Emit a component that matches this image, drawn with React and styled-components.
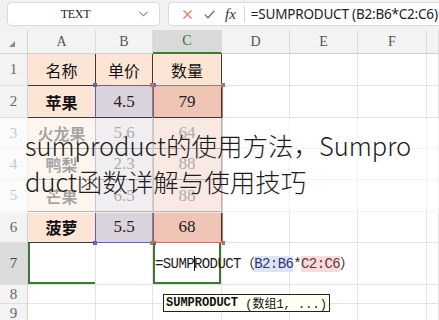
import React from 'react';
import styled, { createGlobalStyle } from 'styled-components';

const GlobalStyle = createGlobalStyle`
  html, body { margin: 0; padding: 0; background: #fff; }
  body { width: 439px; height: 320px; overflow: hidden; font-family: "Liberation Sans", "Noto Sans CJK SC", sans-serif; }
`;

const GREEN = '#3b7a33';

const tones = {
  peach: '#fde5d5',
  lav: '#dad2dc',
  salmon: '#f1c5b6',
  white: '#ffffff',
};

const Page = styled.div`
  position: relative;
  width: 439px;
  height: 320px;
  overflow: hidden;
  background: #fff;
  display: flex;
  flex-direction: column;
`;

const Toolbar = styled.div`
  flex: none;
  height: 30px;
  box-sizing: border-box;
  background: #f1f1f1;
  display: flex;
  align-items: flex-start;
  gap: 8px;
  padding: 2px 0 0 7px;
`;

const NameBox = styled.div`
  width: 153px;
  height: 24px;
  box-sizing: border-box;
  background: #fff;
  border: 1px solid #dadada;
  border-radius: 4px;
  display: grid;
  grid-template-columns: 1fr 20px;
  align-items: center;
`;

const NameText = styled.span`
  text-align: center;
  font-family: "Liberation Serif", serif;
  font-size: 12px;
  color: #222;
  padding-left: 4px;
  letter-spacing: -0.3px;
`;

const Chevron = styled.svg`
  width: 9px;
  height: 6px;
`;

const FormulaBox = styled.div`
  flex: 1;
  height: 24px;
  box-sizing: border-box;
  background: #fff;
  border: 1px solid #dadada;
  border-right: none;
  border-radius: 4px 0 0 4px;
  display: flex;
  align-items: center;
  padding-left: 13px;
`;

const ToolIcon = styled.svg`
  width: 11px;
  height: 11px;
  margin-right: ${p => p.$gap}px;
`;

const Fx = styled.span`
  font-family: "Liberation Serif", serif;
  font-style: italic;
  font-size: 15px;
  color: #333;
  margin-right: 8px;
`;

const Divider = styled.span`
  width: 1px;
  height: 16px;
  background: #d4d4d4;
  margin-right: 6px;
`;

const FormulaBarText = styled.span`
  font-family: "Noto Sans", "Noto Sans CJK SC", sans-serif;
  font-size: 13.5px;
  color: #222;
  white-space: nowrap;
  letter-spacing: -0.2px;
`;

const Sheet = styled.div`
  position: relative;
  flex: 1;
  display: grid;
  grid-template-columns: 28px 68px 57px 69px 68px 68px 69px 1fr;
  grid-template-rows: 24px 32px 32px 31px 31px 32px 31px 42px 19px 20px;
`;

const Corner = styled.div`
  box-sizing: border-box;
  background: #f3f3f3;
  border-right: 1px solid #d2d2d2;
  border-bottom: 1px solid #d2d2d2;
  display: flex;
  align-items: flex-end;
  padding: 0 0 6px 9px;
`;

const ColHead = styled.div`
  box-sizing: border-box;
  background: ${p => (p.$active ? '#d9d9d9' : '#f3f3f3')};
  border-right: 1px solid #dcdcdc;
  border-bottom: ${p => (p.$active ? `2px solid ${GREEN}` : '1px solid #d2d2d2')};
  display: flex;
  align-items: center;
  justify-content: center;
  font-family: "Liberation Serif", serif;
  font-size: 14px;
  color: ${p => (p.$active ? '#3d6b3a' : '#555')};
`;

const RowHead = styled.div`
  box-sizing: border-box;
  background: ${p => (p.$active ? '#dcdcdc' : '#f3f3f3')};
  border-right: 1px solid #d2d2d2;
  border-bottom: 1px solid #dedede;
  display: flex;
  align-items: center;
  justify-content: center;
  font-family: "Liberation Serif", serif;
  font-size: 15px;
  color: ${p => (p.$active ? '#444' : '#666')};
`;

const focusShadow = {
  none: 'none',
  left: `inset 2px 0 0 ${GREEN}, inset 0 -2px 0 ${GREEN}`,
  box: `inset 2px 0 0 ${GREEN}, inset 0 -2px 0 ${GREEN}, inset -2px 0 0 ${GREEN}`,
};

const Cell = styled.div`
  box-sizing: border-box;
  min-width: 0;
  display: flex;
  align-items: center;
  justify-content: center;
  background: ${p => tones[p.$tone || 'white']};
  border-right: 1px solid ${p => (p.$table ? '#3a3a3a' : '#e3e3e3')};
  border-bottom: 1px solid ${p => (p.$table ? '#3a3a3a' : '#e3e3e3')};
  box-shadow: ${p => focusShadow[p.$focus || 'none']};
`;

const FormulaCell = styled(Cell)`
  justify-content: flex-start;
  position: relative;
  z-index: 2;
  overflow: visible;
  padding-left: 2px;
  background: transparent;
`;

const Label = styled.span`
  font-family: "Noto Sans CJK SC", sans-serif;
  font-size: 16px;
  font-weight: ${p => (p.$bold ? 700 : 400)};
  color: #111;
`;

const Num = styled.span`
  font-family: "Liberation Serif", serif;
  font-size: 17px;
  color: #222;
`;

const CellFormula = styled.span`
  display: inline-block;
  font-family: "Liberation Mono", "Noto Sans CJK SC", monospace;
  font-size: 14px;
  letter-spacing: -0.6px;
  color: #1a1a1a;
  white-space: nowrap;
  line-height: 18px;
`;

const Ref = styled.span`
  background: ${p => (p.$c === 'blue' ? '#dfe4f4' : '#f6dddd')};
  color: ${p => (p.$c === 'blue' ? '#2f3b73' : '#6e3434')};
`;

const Caret = styled.span`
  display: inline-block;
  width: 1px;
  height: 15px;
  background: #111;
  margin: 0 -0.5px;
  vertical-align: -3px;
`;

const Range = styled.div`
  position: absolute;
  box-sizing: border-box;
  border: 1px solid ${p => p.$color};
  pointer-events: none;
  z-index: 1;
`;

const Handle = styled.span`
  position: absolute;
  width: 4px;
  height: 4px;
  background: ${p => p.$color};
  ${p => (p.$v === 't' ? 'top: -3px;' : 'bottom: -3px;')}
  ${p => (p.$h === 'l' ? 'left: -3px;' : 'right: -3px;')}
`;

const Tooltip = styled.div`
  position: absolute;
  left: 163px;
  top: 294px;
  height: 18px;
  box-sizing: border-box;
  padding: 0 2px;
  background: #fffff4;
  border: 1px solid #222;
  display: flex;
  align-items: center;
  font-family: "Liberation Mono", "Noto Sans CJK SC", monospace;
  font-size: 12px;
  color: #111;
  white-space: pre;
  z-index: 3;
`;

const TipFn = styled.b`
  font-weight: 700;
`;

const Banner = styled.div`
  position: absolute;
  left: 0;
  top: 118px;
  width: 439px;
  height: 95px;
  box-sizing: border-box;
  padding: 9px 20px 0 25px;
  background: rgba(255, 255, 255, 0.62);
  font-family: "Noto Sans CJK SC", sans-serif;
  font-size: 25.5px;
  font-weight: 300;
  line-height: 36px;
  color: #1c1c1c;
  word-break: break-all;
  z-index: 4;
`;

const data = [
  [{ t: '名称', k: 'label' }, { t: '单价', k: 'label' }, { t: '数量', k: 'label' }],
  [{ t: '苹果', k: 'label', b: true }, { t: '4.5' }, { t: '79' }],
  [{ t: '火龙果', k: 'label', b: true }, { t: '5.6' }, { t: '64' }],
  [{ t: '鸭梨', k: 'label', b: true }, { t: '2.3' }, { t: '88' }],
  [{ t: '芒果', k: 'label', b: true }, { t: '6.5' }, { t: '88' }],
  [{ t: '菠萝', k: 'label', b: true }, { t: '5.5' }, { t: '68' }],
];

const colLetters = ['A', 'B', 'C', 'D', 'E', 'F', ''];

function toneFor(r, c) {
  if (r === 0 || c === 0) return 'peach';
  return c === 1 ? 'lav' : 'salmon';
}

function Empty({ count }) {
  return Array.from({ length: count }, (_, i) => <Cell key={'e' + i} />);
}

function Handles({ color }) {
  return (
    <>
      <Handle $color={color} $v="t" $h="l" />
      <Handle $color={color} $v="t" $h="r" />
      <Handle $color={color} $v="b" $h="l" />
      <Handle $color={color} $v="b" $h="r" />
    </>
  );
}

export default function App() {
  return (
    <Page>
      <GlobalStyle />
      <Toolbar>
        <NameBox>
          <NameText>TEXT</NameText>
          <Chevron viewBox="0 0 9 6">
            <polyline points="0.5,0.8 4.5,4.8 8.5,0.8" fill="none" stroke="#8a8a8a" strokeWidth="1.1" />
          </Chevron>
        </NameBox>
        <FormulaBox>
          <ToolIcon viewBox="0 0 11 11" $gap={11}>
            <path d="M1.5 1.5 L9.5 9.5 M9.5 1.5 L1.5 9.5" stroke="#e07a76" strokeWidth="1.3" fill="none" />
          </ToolIcon>
          <ToolIcon viewBox="0 0 11 11" $gap={10}>
            <polyline points="0.8,5.6 4,8.8 10.4,1.8" stroke="#6f6f6f" strokeWidth="1.3" fill="none" />
          </ToolIcon>
          <Fx>fx</Fx>
          <Divider />
          <FormulaBarText>=SUMPRODUCT (B2:B6*C2:C6)</FormulaBarText>
        </FormulaBox>
      </Toolbar>

      <Sheet>
        <Corner>
          <svg width="6" height="6" viewBox="0 0 6 6">
            <polygon points="6,0 6,6 0,6" fill="#8c8c8c" />
          </svg>
        </Corner>
        {colLetters.map((l, i) => (
          <ColHead key={'h' + i} $active={l === 'C'}>{l}</ColHead>
        ))}

        {data.map((row, r) => (
          <React.Fragment key={'r' + r}>
            <RowHead>{r + 1}</RowHead>
            {row.map((c, ci) => (
              <Cell key={ci} $tone={toneFor(r, ci)} $table>
                {c.k === 'label' ? <Label $bold={c.b}>{c.t}</Label> : <Num>{c.t}</Num>}
              </Cell>
            ))}
            <Empty count={4} />
          </React.Fragment>
        ))}

        <RowHead $active>7</RowHead>
        <Cell $focus="left" />
        <Cell />
        <FormulaCell $focus="box">
          <CellFormula>
            =SUMP<Caret />RODUCT（<Ref $c="blue">B2:B6</Ref>*<Ref $c="red">C2:C6</Ref>）
          </CellFormula>
        </FormulaCell>
        <Empty count={4} />

        <RowHead>8</RowHead>
        <Empty count={7} />
        <RowHead>9</RowHead>
        <Empty count={7} />

        <Range $color="#5a69a6" style={{ left: 95, top: 55, width: 59, height: 158 }}>
          <Handles color="#5a69a6" />
        </Range>
        <Range $color="#b9716c" style={{ left: 152, top: 55, width: 71, height: 158 }}>
          <Handles color="#b9716c" />
        </Range>
      </Sheet>

      <Banner>sumproduct的使用方法，Sumproduct函数详解与使用技巧</Banner>

      <Tooltip>
        <TipFn>SUMPRODUCT</TipFn> (数组1, ...)
      </Tooltip>
    </Page>
  );
}
